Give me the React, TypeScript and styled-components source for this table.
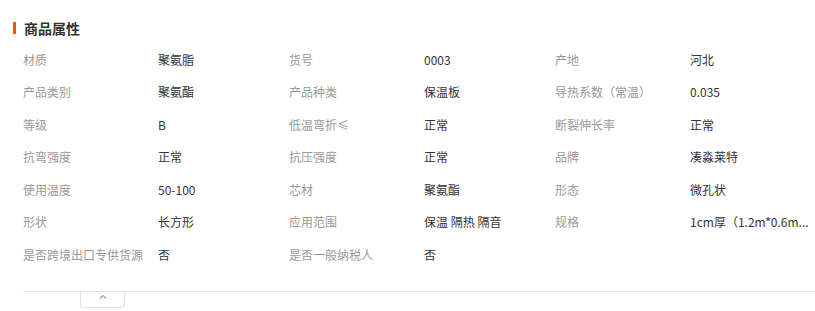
import { Fragment } from "react";
import styled, { createGlobalStyle } from "styled-components";

const GlobalStyle = createGlobalStyle`
  body {
    margin: 0;
    background: #fff;
    font-family: "Noto Sans CJK SC", "Liberation Sans", sans-serif;
  }
`;

type Attr = { label: string; value: string };

const attrs: Attr[] = [
  { label: "材质", value: "聚氨脂" },
  { label: "货号", value: "0003" },
  { label: "产地", value: "河北" },
  { label: "产品类别", value: "聚氨酯" },
  { label: "产品种类", value: "保温板" },
  { label: "导热系数（常温）", value: "0.035" },
  { label: "等级", value: "B" },
  { label: "低温弯折≤", value: "正常" },
  { label: "断裂伸长率", value: "正常" },
  { label: "抗弯强度", value: "正常" },
  { label: "抗压强度", value: "正常" },
  { label: "品牌", value: "凑淼莱特" },
  { label: "使用温度", value: "50-100" },
  { label: "芯材", value: "聚氨酯" },
  { label: "形态", value: "微孔状" },
  { label: "形状", value: "长方形" },
  { label: "应用范围", value: "保温 隔热 隔音" },
  { label: "规格", value: "1cm厚（1.2m*0.6m..." },
  { label: "是否跨境出口专供货源", value: "否" },
  { label: "是否一般纳税人", value: "否" },
];

const Section = styled.section`
  padding: 18px 0 0 13px;
`;

const Title = styled.h2`
  display: flex;
  align-items: center;
  gap: 8px;
  margin: 0;
  height: 20px;
  font-size: 14px;
  font-weight: 700;
  color: #333;
  line-height: 20px;

  &::before {
    content: "";
    width: 3px;
    height: 12px;
    background: #ff5000;
  }
`;

const Grid = styled.dl`
  display: grid;
  grid-template-columns: repeat(3, 135px 131px);
  grid-auto-rows: 32.5px;
  margin: 4.75px 0 0 10px;
  padding-bottom: 20.5px;
  font-size: 12px;
`;

const Label = styled.dt`
  display: flex;
  align-items: center;
  color: #999;
  white-space: nowrap;
`;

const Value = styled.dd`
  display: flex;
  align-items: center;
  margin: 0;
  color: #333;
  white-space: nowrap;
`;

const Footer = styled.div`
  margin-left: 10px;
  border-top: 1px solid #e3e3e3;
  height: 20px;
`;

const Toggle = styled.button`
  display: flex;
  align-items: flex-start;
  justify-content: center;
  margin-left: 57px;
  width: 45px;
  height: 16px;
  padding: 2px 0 0;
  border: 1px solid #e0e0e0;
  border-top: none;
  border-radius: 0 0 4px 4px;
  background: #fff;
  cursor: pointer;
`;

export default function App() {
  return (
    <>
      <GlobalStyle />
      <Section>
        <Title>商品属性</Title>
        <Grid>
          {attrs.map((a) => (
            <Fragment key={a.label}>
              <Label>{a.label}</Label>
              <Value>{a.value}</Value>
            </Fragment>
          ))}
        </Grid>
        <Footer>
          <Toggle aria-label="收起">
            <svg width="8" height="5" viewBox="0 0 8 5">
              <path d="M1 4.5 L4 1.5 L7 4.5" fill="none" stroke="#999" strokeWidth="1.2" />
            </svg>
          </Toggle>
        </Footer>
      </Section>
    </>
  );
}
